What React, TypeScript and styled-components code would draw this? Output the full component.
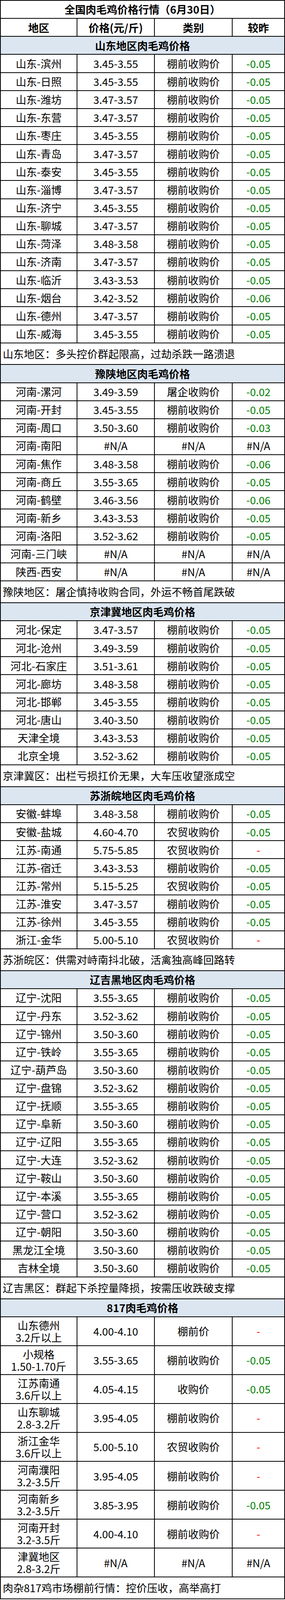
import type { CSSProperties } from "react";
import styled, { createGlobalStyle } from "styled-components";

const GlobalStyle = createGlobalStyle`
	html, body {
		margin: 0;
		padding: 0;
		background: #fff;
	}
	body {
		font-family: "Noto Sans CJK SC", "Noto Sans", sans-serif;
		color: #000;
	}
`;

// the sheet is laid out for a 4701px tall page; when the window is shorter,
// the rows are squeezed so that the whole sheet stays on screen
const SHEET_HEIGHT = 4700;

const Sheet = styled.div`
	display: grid;
	grid-template-columns: 196px 198px 199px 134px;
	width: 729px;
	box-sizing: border-box;
	border-top: 2px solid #000;
	border-left: 2px solid #000;
`;

const Cell = styled.div<{ $tall?: boolean; $tone?: "up" | "down" | "none" }>`
	box-sizing: border-box;
	height: calc(${props => (props.$tall ? "85px" : "53px")} * var(--fit, 1));
	border-right: 2px solid #000;
	border-bottom: 2px solid #000;
	display: flex;
	flex-direction: column;
	align-items: center;
	justify-content: center;
	font-size: 27px;
	line-height: calc(36px * var(--fit, 1));
	white-space: nowrap;
	overflow: hidden;
	color: ${props =>
		props.$tone === "down" ? "#008000" : props.$tone === "none" ? "#ff0000" : "#000"};
`;

const WideCell = styled(Cell)`
	grid-column: 1 / -1;
`;

const TitleCell = styled(WideCell)`
	font-weight: 700;
	background: #fff;
`;

const HeadCell = styled(Cell)`
	font-weight: 700;
`;

const SectionCell = styled(WideCell)`
	font-weight: 700;
	background: #dce6f1;
`;

const NoteCell = styled(WideCell)`
	height: calc(64px * var(--fit, 1));
	align-items: flex-start;
	padding-left: 5px;
`;

interface PriceRow {
	area: string;
	price: string;
	kind: string;
	change: string;
}

interface Region {
	title: string;
	note: string;
	tall?: boolean;
	rows: PriceRow[];
}

const FARM = "棚前收购价";
const MARKET = "农贸收购价";
const NA = "#N/A";

const row = (area: string, price: string, kind: string = FARM, change: string = "-0.05"): PriceRow => ({
	area,
	price,
	kind,
	change,
});
const naRow = (area: string): PriceRow => ({ area, price: NA, kind: NA, change: NA });

const regions: Region[] = [
	{
		title: "山东地区肉毛鸡价格",
		note: "山东地区：多头控价群起限高，过劫杀跌一路溃退",
		rows: [
			row("山东-滨州", "3.45-3.55"),
			row("山东-日照", "3.45-3.55"),
			row("山东-潍坊", "3.47-3.57"),
			row("山东-东营", "3.47-3.57"),
			row("山东-枣庄", "3.45-3.55"),
			row("山东-青岛", "3.47-3.57"),
			row("山东-泰安", "3.45-3.55"),
			row("山东-淄博", "3.47-3.57"),
			row("山东-济宁", "3.45-3.55"),
			row("山东-聊城", "3.47-3.57"),
			row("山东-菏泽", "3.48-3.58"),
			row("山东-济南", "3.47-3.57"),
			row("山东-临沂", "3.43-3.53"),
			row("山东-烟台", "3.42-3.52", FARM, "-0.06"),
			row("山东-德州", "3.47-3.57"),
			row("山东-威海", "3.45-3.55"),
		],
	},
	{
		title: "豫陕地区肉毛鸡价格",
		note: "豫陕地区：屠企慎持收购合同，外运不畅首尾跌破",
		rows: [
			row("河南-漯河", "3.49-3.59", "屠企收购价", "-0.02"),
			row("河南-开封", "3.45-3.55"),
			row("河南-周口", "3.50-3.60", FARM, "-0.03"),
			naRow("河南-南阳"),
			row("河南-焦作", "3.48-3.58", FARM, "-0.06"),
			row("河南-商丘", "3.55-3.65"),
			row("河南-鹤壁", "3.46-3.56", FARM, "-0.06"),
			row("河南-新乡", "3.43-3.53"),
			row("河南-洛阳", "3.52-3.62"),
			naRow("河南-三门峡"),
			naRow("陕西-西安"),
		],
	},
	{
		title: "京津冀地区肉毛鸡价格",
		note: "京津冀区：出栏亏损扛价无果，大车压收望涨成空",
		rows: [
			row("河北-保定", "3.47-3.57"),
			row("河北-沧州", "3.49-3.59"),
			row("河北-石家庄", "3.51-3.61"),
			row("河北-廊坊", "3.48-3.58"),
			row("河北-邯郸", "3.45-3.55"),
			row("河北-唐山", "3.40-3.50"),
			row("天津全境", "3.43-3.53"),
			row("北京全境", "3.52-3.62"),
		],
	},
	{
		title: "苏浙皖地区肉毛鸡价格",
		note: "苏浙皖区：供需对峙南抖北破，活禽独高峰回路转",
		rows: [
			row("安徽-蚌埠", "3.48-3.58"),
			row("安徽-盐城", "4.60-4.70", MARKET),
			row("江苏-南通", "5.75-5.85", MARKET, "-"),
			row("江苏-宿迁", "3.43-3.53"),
			row("江苏-常州", "5.15-5.25", MARKET),
			row("江苏-淮安", "3.47-3.57"),
			row("江苏-徐州", "3.45-3.55"),
			row("浙江-金华", "5.00-5.10", MARKET, "-"),
		],
	},
	{
		title: "辽吉黑地区肉毛鸡价格",
		note: "辽吉黑区：群起下杀控量降损，按需压收跌破支撑",
		rows: [
			row("辽宁-沈阳", "3.55-3.65"),
			row("辽宁-丹东", "3.52-3.62"),
			row("辽宁-锦州", "3.50-3.60"),
			row("辽宁-铁岭", "3.55-3.65"),
			row("辽宁-葫芦岛", "3.50-3.60"),
			row("辽宁-盘锦", "3.52-3.62"),
			row("辽宁-抚顺", "3.55-3.65"),
			row("辽宁-阜新", "3.50-3.60"),
			row("辽宁-辽阳", "3.55-3.65"),
			row("辽宁-大连", "3.52-3.62"),
			row("辽宁-鞍山", "3.50-3.60"),
			row("辽宁-本溪", "3.55-3.65"),
			row("辽宁-营口", "3.52-3.62"),
			row("辽宁-朝阳", "3.50-3.60"),
			row("黑龙江全境", "3.50-3.60"),
			row("吉林全境", "3.50-3.60"),
		],
	},
	{
		title: "817肉毛鸡价格",
		note: "肉杂817鸡市场棚前行情：控价压收，高举高打",
		tall: true,
		rows: [
			row("山东德州\n3.2斤以上", "4.00-4.10", "棚前价", "-"),
			row("小规格\n1.50-1.70斤", "3.55-3.65"),
			row("江苏南通\n3.6斤以上", "4.05-4.15", "收购价"),
			row("山东聊城\n2.8-3.2斤", "3.95-4.05", FARM, "-"),
			row("浙江金华\n3.6斤以上", "5.00-5.10", MARKET, "-"),
			row("河南濮阳\n3.2-3.5斤", "3.95-4.05", FARM, "-"),
			row("河南新乡\n3.2-3.5斤", "3.85-3.95"),
			row("河南开封\n3.2-3.5斤", "4.00-4.10", FARM, "-"),
			naRow("津冀地区\n2.8-3.2斤"),
		],
	},
];

function toneOf(change: string): "up" | "down" | "none" {
	if (change === "-") return "none";
	if (change.startsWith("-")) return "down";
	return "up";
}

function App() {
	const fit = Math.min(1, (window.innerHeight - 3) / SHEET_HEIGHT);
	return (
		<>
			<GlobalStyle />
			<Sheet style={{ "--fit": fit } as CSSProperties}>
				<TitleCell>全国肉毛鸡价格行情（6月30日）</TitleCell>
				<HeadCell>地区</HeadCell>
				<HeadCell>价格(元/斤)</HeadCell>
				<HeadCell>类别</HeadCell>
				<HeadCell>较昨</HeadCell>
				{regions.map(region => (
					<Region key={region.title} region={region} />
				))}
			</Sheet>
		</>
	);
}

function Region({ region }: { region: Region }) {
	return (
		<>
			<SectionCell>{region.title}</SectionCell>
			{region.rows.map(r => (
				<Row key={r.area} data={r} tall={region.tall} />
			))}
			<NoteCell>{region.note}</NoteCell>
		</>
	);
}

function Row({ data, tall }: { data: PriceRow; tall?: boolean }) {
	return (
		<>
			<Cell $tall={tall}>
				{data.area.split("\n").map(line => (
					<span key={line}>{line}</span>
				))}
			</Cell>
			<Cell $tall={tall}>{data.price}</Cell>
			<Cell $tall={tall}>{data.kind}</Cell>
			<Cell $tall={tall} $tone={toneOf(data.change)}>
				{data.change}
			</Cell>
		</>
	);
}

export default App;
